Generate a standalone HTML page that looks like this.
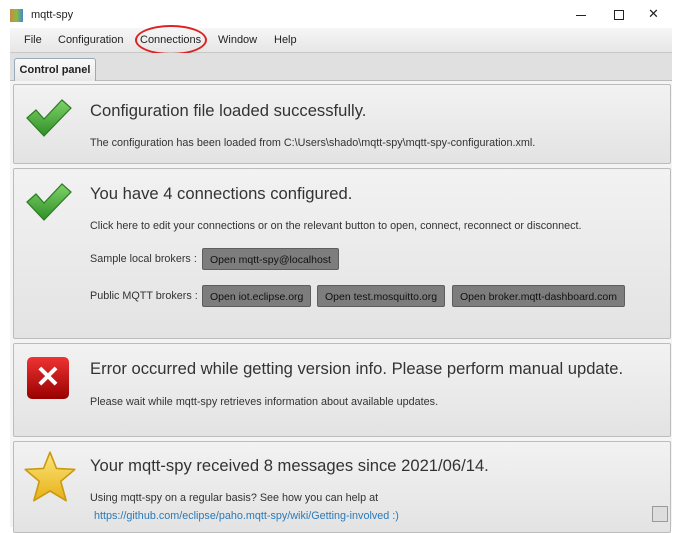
<!DOCTYPE html>
<html><head><style>
body{margin:0;width:680px;height:526px;overflow:hidden;background:#fff;font-family:"Liberation Sans",sans-serif;position:relative}
.abs{position:absolute}
.menu{top:28px;left:10px;width:662px;height:24px;background:linear-gradient(#f6f6f6,#e6e6e6);border-bottom:1px solid #c8c8c8;font-size:11px;color:#222}
.menu span{position:absolute;top:6px}
.tabs{top:53px;left:10px;width:662px;height:473px;background:#e0e0e0}
.tab{top:58px;left:14px;width:80px;height:22px;background:linear-gradient(#fafafa,#e8e8e8);border:1px solid #9ab;border-bottom:none;border-radius:3px 3px 0 0;font-size:11px;font-weight:bold;text-align:center;line-height:22px;color:#222}
.content{top:80px;left:10px;width:662px;height:446px;background:#f4f4f4;border-top:1px solid #bbb}
.panel{left:13px;width:656px;background:linear-gradient(#f2f2f2,#e3e3e3);border:1px solid #bcbcbc;border-radius:2px}
.t{position:absolute;left:76px;font-size:16.6px;color:#333}
.s{position:absolute;left:76px;font-size:10.8px;color:#333}
.btn{position:absolute;height:22px;background:#7d7d7d;border:1px solid #5e5e5e;border-radius:2px;font-size:10.5px;color:#111;line-height:22px;padding:0 7px;box-sizing:border-box}
</style></head><body>
<div class="abs" style="left:10px;top:9px;width:13px;height:13px;background:linear-gradient(90deg,#c84,#8b4,#48c)"></div>
<div class="abs" style="left:31px;top:9px;font-size:11px;color:#222">mqtt-spy</div>
<div class="abs" style="left:576px;top:15px;width:10px;height:1px;background:#222"></div>
<div class="abs" style="left:614px;top:10px;width:8px;height:8px;border:1px solid #222"></div>
<div class="abs" style="left:648px;top:6px;font-size:13px;color:#222">✕</div>
<div class="abs menu"><span style="left:14px">File</span><span style="left:48px">Configuration</span><span style="left:130px">Connections</span><span style="left:208px">Window</span><span style="left:264px">Help</span></div>
<div class="abs" style="left:135px;top:25px;width:68px;height:26px;border:2px solid #d22;border-radius:50%"></div>
<div class="abs tabs"></div>
<div class="abs content"></div>
<div class="abs tab">Control panel</div>

<div class="abs panel" style="top:84px;height:78px">
<svg class="abs" style="left:11px;top:12px" width="48" height="42" viewBox="0 0 48 42"><defs><linearGradient id="g" x1="0" y1="0" x2="0" y2="1"><stop offset="0" stop-color="#7fd36a"/><stop offset="1" stop-color="#2f8f26"/></linearGradient></defs><path d="M2 21 L11 13 L19 22 L37 3 L46 11 L19 39 Z" fill="url(#g)" stroke="#2d7a25" stroke-width="1.2"/></svg>
<div class="t" style="top:16px">Configuration file loaded successfully.</div>
<div class="s" style="top:52px">The configuration has been loaded from C:\Users\shado\mqtt-spy\mqtt-spy-configuration.xml.</div>
</div>

<div class="abs panel" style="top:168px;height:169px">
<svg class="abs" style="left:11px;top:12px" width="48" height="42" viewBox="0 0 48 42"><path d="M2 21 L11 13 L19 22 L37 3 L46 11 L19 39 Z" fill="url(#g)" stroke="#2d7a25" stroke-width="1.2"/></svg>
<div class="t" style="top:15px">You have 4 connections configured.</div>
<div class="s" style="top:51px">Click here to edit your connections or on the relevant button to open, connect, reconnect or disconnect.</div>
<div class="s" style="top:84px">Sample local brokers :</div>
<div class="btn" style="left:188px;top:79px">Open mqtt-spy@localhost</div>
<div class="s" style="top:121px">Public MQTT brokers :</div>
<div class="btn" style="left:188px;top:116px">Open iot.eclipse.org</div>
<div class="btn" style="left:303px;top:116px">Open test.mosquitto.org</div>
<div class="btn" style="left:438px;top:116px">Open broker.mqtt-dashboard.com</div>
</div>

<div class="abs panel" style="top:343px;height:92px">
<div class="abs" style="left:13px;top:13px;width:42px;height:42px;background:linear-gradient(#e33,#900);border-radius:5px;color:#fff;font-size:30px;font-weight:bold;text-align:center;line-height:42px">✕</div>
<div class="t" style="top:15px">Error occurred while getting version info. Please perform manual update.</div>
<div class="s" style="top:52px">Please wait while mqtt-spy retrieves information about available updates.</div>
</div>

<div class="abs panel" style="top:441px;height:90px">
<svg class="abs" style="left:8px;top:8px" width="56" height="54" viewBox="0 0 52 50"><defs><linearGradient id="y" x1="0" y1="0" x2="0" y2="1"><stop offset="0" stop-color="#fbe67a"/><stop offset="1" stop-color="#e8b018"/></linearGradient></defs><path d="M26 2 L32 17 L49 18 L36 29 L41 47 L26 38 L11 47 L16 29 L3 18 L20 17 Z" fill="url(#y)" stroke="#c99a10" stroke-width="1.5" stroke-linejoin="round"/></svg>
<div class="t" style="top:14px">Your mqtt-spy received 8 messages since 2021/06/14.</div>
<div class="s" style="top:50px">Using mqtt-spy on a regular basis? See how you can help at</div>
<div class="s" style="top:68px;left:80px;color:#2a7ab8">https://github.com/eclipse/paho.mqtt-spy/wiki/Getting-involved :)</div>
<div class="abs" style="left:638px;top:64px;width:14px;height:14px;border:1px solid #999;background:#ddd"></div>
</div>
</body></html>
